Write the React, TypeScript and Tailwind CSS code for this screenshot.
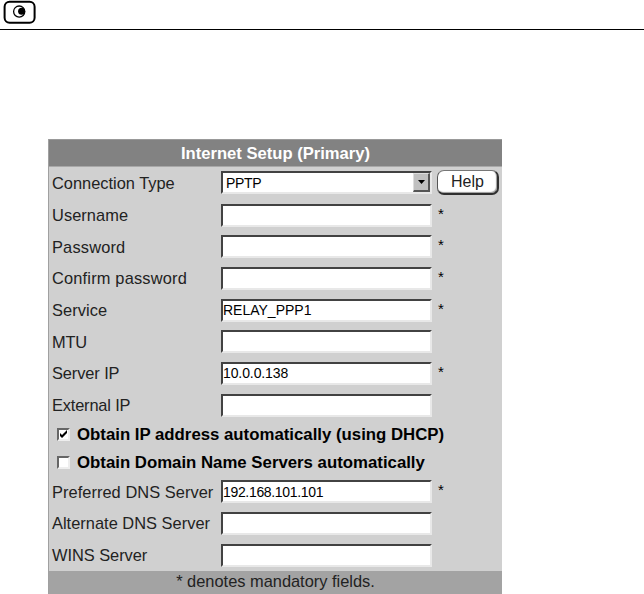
type RowProps = {
  label: string;
  labelClass: string;
  height?: string;
  value?: string;
  valueClass?: string;
  required?: boolean;
};

const fieldBox =
  "flex h-[23px] w-[211px] shrink-0 items-center border-t-2 border-l-2 border-r-2 border-b-2 border-t-[#424242] border-l-[#424242] border-r-[#e8e8e8] border-b-[#e8e8e8] bg-white text-[14px] leading-none text-black whitespace-nowrap";

function Row({ label, labelClass, height = "h-[31.67px]", value = "", valueClass = "", required }: RowProps) {
  return (
    <div className={`flex items-center ${height}`}>
      <div className={`w-[172px] shrink-0 pl-[3px] text-[16.4px] leading-none whitespace-nowrap ${labelClass}`}>{label}</div>
      <div className={fieldBox}>
        <span className={valueClass}>{value}</span>
      </div>
      {required && <span className="pb-[4px] pl-[6px] text-[15px] leading-none text-black">*</span>}
    </div>
  );
}

function Check({ checked, label, className }: { checked?: boolean; label: string; className: string }) {
  return (
    <div className={`flex items-center text-[16.8px] leading-none font-bold whitespace-nowrap text-black ${className}`}>
      <span className="ml-[8px] mr-[7px] block size-[13px] shrink-0 border-2 border-t-[#666] border-l-[#666] border-r-[#eee] border-b-[#eee] bg-white">
        {checked && (
          <svg viewBox="0 0 9 9" className="block size-[9px]">
            <path d="M1 3v3l2 2 5-5V0L3 5z" fill="#000" />
          </svg>
        )}
      </span>
      <span className="pt-[2px]">{label}</span>
    </div>
  );
}

export default function App() {
  return (
    <div className="h-[594px] w-[644px] overflow-hidden bg-white font-['Liberation_Sans',Arial,sans-serif]">
      <header className="h-[30px] border-b border-black">
        <svg width="40" height="28" viewBox="0 0 40 28" className="block">
          <rect x="4.6" y="1.8" width="30" height="21" rx="5" fill="#fff" stroke="#000" strokeWidth="2" />
          <circle cx="19.2" cy="11.6" r="5.6" fill="#fff" stroke="#000" strokeWidth="1.3" />
          <circle cx="21.6" cy="11.3" r="3.5" fill="#000" />
        </svg>
      </header>
      <main className="mt-[109px] ml-[48px] h-[455px] w-[454px] border-l border-[#a0a0a0] bg-[#d0d0d0] text-[#222]">
        <h1 className="flex h-[28px] items-center justify-center border-t border-b border-t-[#999] border-b-[#a8a8a8] bg-[#828282] pt-[3px] text-[16.6px] leading-none font-bold text-white">
          Internet Setup (Primary)
        </h1>
        <div className="flex h-[32.3px] items-start pt-[4px]">
          <div className="w-[172px] shrink-0 pt-[3.5px] pl-[3px] text-[16.4px] leading-none">Connection Type</div>
          <div className={`${fieldBox} justify-between`}>
            <span className="pl-[3px] text-[14px] tracking-[-0.3px]">PPTP</span>
            <span className="flex h-[19px] w-[17px] items-center justify-center border-t border-l border-r-2 border-b-2 border-t-[#ddd] border-l-[#ddd] border-r-[#555] border-b-[#555] bg-[#c0c0c0]">
              <svg width="7" height="4" viewBox="0 0 7 4"><path d="M0 0h7L3.5 4z" /></svg>
            </span>
          </div>
          <button className="-mt-px ml-[5px] flex h-[25px] w-[62px] items-center justify-center rounded-[7px] border-t border-l border-r-2 border-b-2 border-t-[#777] border-l-[#555] border-r-[#303030] border-b-[#303030] bg-white pb-px text-[16px] leading-none text-[#222] shadow-[inset_-1px_-1px_1px_#999]">
            Help
          </button>
        </div>
        <Row label="Username" labelClass="tracking-[0.06px]" required />
        <Row label="Password" labelClass="tracking-[0.18px]" required />
        <Row label="Confirm password" labelClass="tracking-[0.18px]" required />
        <Row label="Service" labelClass="tracking-[0.08px]" value="RELAY_PPP1" valueClass="tracking-[0px]" required />
        <Row label="MTU" labelClass="tracking-[-0.2px]" />
        <Row label="Server IP" labelClass="tracking-[-0.1px]" value="10.0.0.138" valueClass="tracking-[-0.1px]" required />
        <Row label="External IP" labelClass="tracking-[-0.17px]" />
        <Check checked label="Obtain IP address automatically (using DHCP)" className="h-[27.5px]" />
        <Check label="Obtain Domain Name Servers automatically" className="h-[27.5px]" />
        <Row label="Preferred DNS Server" labelClass="tracking-[0.05px]" value="192.168.101.101" valueClass="tracking-[-0.33px]" required />
        <Row label="Alternate DNS Server" labelClass="tracking-[0.02px]" />
        <Row label="WINS Server" labelClass="tracking-[-0.03px]" height="h-[31.6px]" />
        <footer className="flex h-[24px] items-start justify-center bg-[#a3a3a3] pt-[2px] text-[16.4px] leading-[17px]">
          * denotes mandatory fields.
        </footer>
      </main>
    </div>
  );
}
